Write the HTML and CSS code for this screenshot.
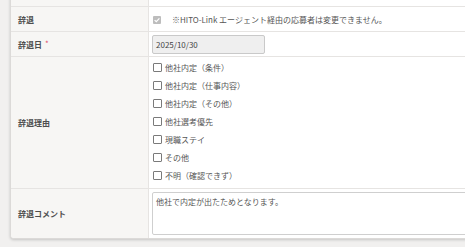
FILE: index.html
```html
<!DOCTYPE html>
<html lang="ja">
<head>
  <meta charset="UTF-8">
  <meta name="viewport" content="width=device-width, initial-scale=1.0">
  <title>辞退情報</title>
  <link rel="stylesheet" href="styles.css">
</head>
<body>
  <div class="card">
    <div class="row row-prev">
      <div class="label"></div>
      <div class="value"></div>
    </div>

    <div class="row row-short">
      <div class="label">辞退</div>
      <div class="value">
        <span class="check check-disabled">
          <svg viewBox="0 0 8 8" width="8" height="8"><path d="M1.6 4.1 L3.3 5.7 L6.4 2.3" fill="none" stroke="#fff" stroke-width="1.2"/></svg>
        </span>
        <span class="note">※HITO-Link エージェント経由の応募者は変更できません。</span>
      </div>
    </div>

    <div class="row row-short">
      <div class="label">辞退日<span class="required">*</span></div>
      <div class="value">
        <div class="date-input">2025/10/30</div>
      </div>
    </div>

    <div class="row">
      <div class="label">辞退理由</div>
      <div class="value reasons">
        <label class="reason"><span class="check"></span>他社内定（条件）</label>
        <label class="reason"><span class="check"></span>他社内定（仕事内容）</label>
        <label class="reason"><span class="check"></span>他社内定（その他）</label>
        <label class="reason"><span class="check"></span>他社選考優先</label>
        <label class="reason"><span class="check"></span>現職ステイ</label>
        <label class="reason"><span class="check"></span>その他</label>
        <label class="reason"><span class="check"></span>不明（確認できず）</label>
      </div>
    </div>

    <div class="row row-last">
      <div class="label">辞退コメント</div>
      <div class="value">
        <div class="textarea">他社で内定が出たためとなります。</div>
      </div>
    </div>
  </div>
</body>
</html>
```

FILE: styles.css
```css
body {
  margin: 0;
  background: #f1f0ef;
  font-family: "Noto Sans CJK JP", "Noto Sans", sans-serif;
  font-size: 8px;
  color: #555;
  overflow: hidden;
  height: 247px;
}

.card {
  width: 540px;
  margin: -18px 0 0 10px;
  background: #fff;
  border: 1px solid #dcdad8;
  border-radius: 4px;
  box-shadow: 0 1px 3px rgba(0, 0, 0, 0.18);
  overflow: hidden;
}

.row {
  display: flex;
  border-bottom: 1px solid #e6e4e2;
}

.row-last {
  border-bottom: none;
}

.row-prev {
  height: 23px;
}

.label {
  width: 138px;
  flex-shrink: 0;
  background: #f7f6f4;
  border-right: 1px solid #e6e4e2;
  display: flex;
  align-items: center;
  padding-left: 7px;
  box-sizing: border-box;
  font-weight: 700;
  color: #4e4e4e;
}

.required {
  color: #e2506a;
  font-weight: 400;
  margin-left: 3px;
  position: relative;
  top: -1px;
}

.value {
  flex: 1;
  padding: 3px 3px 2px 3px;
  display: flex;
  align-items: center;
}

.row-short .value {
  min-height: 19px;
}

.check {
  display: inline-block;
  width: 7px;
  height: 7px;
  border: 1px solid #7a7a7a;
  border-radius: 1px;
  background: #fff;
  margin: 0 3px 0 1px;
  flex-shrink: 0;
}

.check-disabled {
  width: 8px;
  height: 8px;
  border: none;
  background: #bdbdbd;
  margin: 0 11px 0 1px;
}

.check-disabled svg {
  display: block;
}

.note {
  color: #555;
}

.date-input {
  width: 108px;
  height: 17px;
  line-height: 17px;
  padding-left: 3px;
  background: #efefef;
  border: 1px solid #c9c9c9;
  border-radius: 2px;
  color: #444;
}

.reasons {
  flex-direction: column;
  align-items: flex-start;
  padding-top: 1px;
  padding-bottom: 4px;
}

.reason {
  display: flex;
  align-items: center;
  height: 18px;
  color: #555;
}

.textarea {
  width: 100%;
  height: 35px;
  margin: 0 0 1px;
  padding: 3px 3px;
  border: 1px solid #cfcfcf;
  border-radius: 2px;
  color: #555;
}
```
